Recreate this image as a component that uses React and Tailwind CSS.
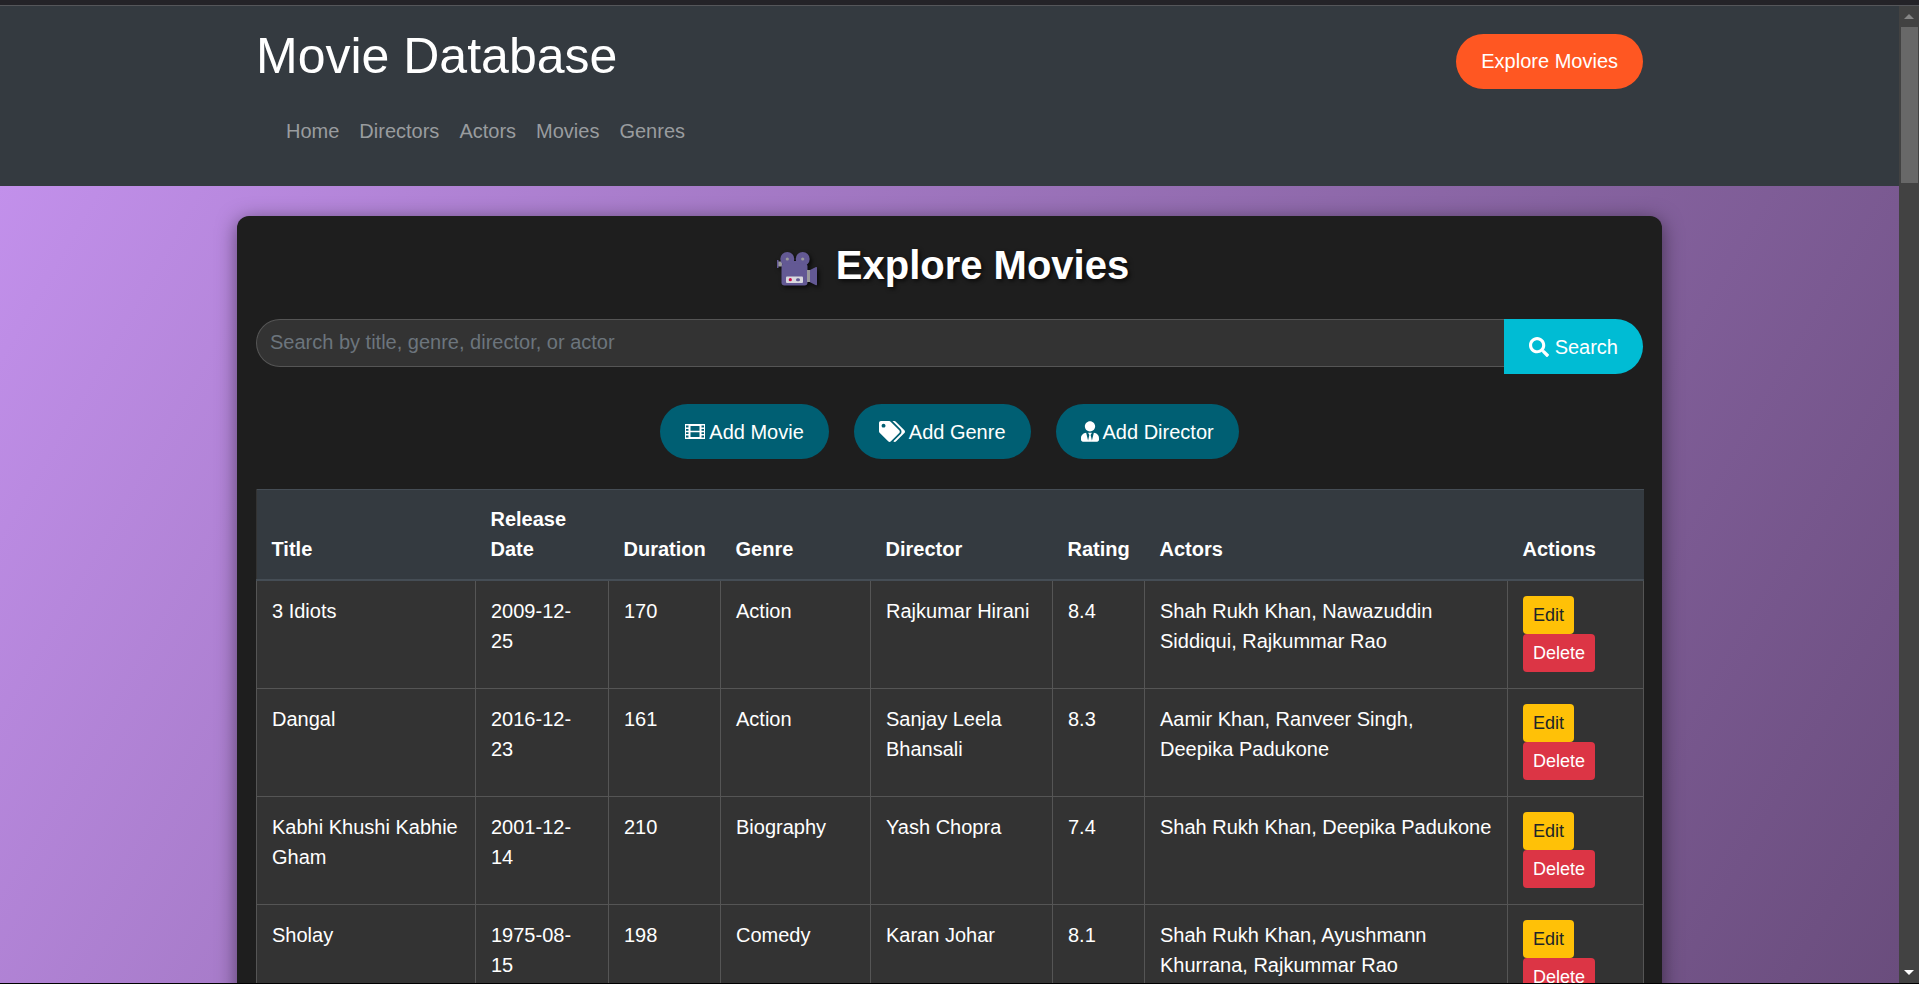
import { FaSearch, FaTags, FaUserTie } from "react-icons/fa";

const navItems = ["Home", "Directors", "Actors", "Movies", "Genres"];

const columns = [
  { label: "Title", width: "w-[219px]" },
  { label: "Release Date", width: "w-[133px]" },
  { label: "Duration", width: "w-[112px]" },
  { label: "Genre", width: "w-[150px]" },
  { label: "Director", width: "w-[182px]" },
  { label: "Rating", width: "w-[92px]" },
  { label: "Actors", width: "w-[363px]" },
  { label: "Actions", width: "w-[136px]" },
];

const movies = [
  ["3 Idiots", "2009-12-25", "170", "Action", "Rajkumar Hirani", "8.4", "Shah Rukh Khan, Nawazuddin Siddiqui, Rajkummar Rao"],
  ["Dangal", "2016-12-23", "161", "Action", "Sanjay Leela Bhansali", "8.3", "Aamir Khan, Ranveer Singh, Deepika Padukone"],
  ["Kabhi Khushi Kabhie Gham", "2001-12-14", "210", "Biography", "Yash Chopra", "7.4", "Shah Rukh Khan, Deepika Padukone"],
  ["Sholay", "1975-08-15", "198", "Comedy", "Karan Johar", "8.1", "Shah Rukh Khan, Ayushmann Khurrana, Rajkummar Rao"],
];

function FilmIcon() {
  return (
    <svg viewBox="0 0 20 15" className="h-[15px] w-5" fill="none" stroke="currentColor" aria-hidden="true">
      <path d="M0.5 0v15M19.500 0v15" strokeWidth="1" />
      <path d="M4.500 0v15M15.500 0v15" strokeWidth="2" />
      <path d="M4 1h12M4 14h12" strokeWidth="2" />
      <path d="M4 7.500h12" strokeWidth="1.500" />
      <path d="M0 .8h4M0 4.200h4M0 7.500h4M0 10.800h4M0 14.200h4M16 .8h4M16 4.200h4M16 7.500h4M16 10.800h4M16 14.200h4" strokeWidth="1.500" />
    </svg>
  );
}

function CameraIcon() {
  return (
    <svg viewBox="0 0 55 48" className="h-12 w-[55px] drop-shadow-[2px_2px_2px_rgba(0,0,0,0.7)]" aria-hidden="true">
      <path d="M8 20.500h4v5H8z" fill="#9b9b9b" />
      <path d="M7 19h1.500v8H7z" fill="#635994" />
      <circle cx="17.300" cy="18" r="7" fill="#635994" />
      <circle cx="32.700" cy="18" r="7" fill="#635994" />
      <circle cx="17.300" cy="18" r="1.600" fill="#9b9b9b" />
      <circle cx="32.700" cy="18" r="1.600" fill="#9b9b9b" />
      <path d="M20 20h10v6H20z" fill="#635994" />
      <rect x="11.500" y="22.500" width="26" height="22" rx="3" fill="#635994" />
      <rect x="37" y="29" width="3" height="12" fill="#9b9b9b" />
      <path d="M40 29l6-3q1-.4 1 .6v17q0 1-1 .6l-6-3z" fill="#635994" />
      <rect x="16" y="35.500" width="17" height="6.500" rx="1" fill="#d9d9de" />
      <circle cx="20.300" cy="38.700" r="1.600" fill="#ca0b4a" />
      <rect x="26" y="37.200" width="4" height="3" rx="1.500" fill="#635994" />
    </svg>
  );
}

function ActionButton({ icon, children }) {
  return (
    <button type="button" className="flex h-[55px] items-center gap-1 rounded-full bg-[#005f73] px-[25px] text-white">
      {icon}
      {children}
    </button>
  );
}

function Scrollbar() {
  return (
    <div className="flex w-5 shrink-0 flex-col items-center bg-[#424242]" aria-hidden="true">
      <div className="flex h-[21px] items-center justify-center">
        <svg viewBox="0 0 10 5" className="h-[5px] w-[10px]"><path d="M0 5L5 0l5 5z" fill="#868686" /></svg>
      </div>
      <div className="h-[156px] w-[17px] bg-[#686868]" />
      <div className="mt-auto flex h-[21px] items-center justify-center">
        <svg viewBox="0 0 10 5" className="h-[5px] w-[10px]"><path d="M0 0L5 5l5-5z" fill="#ffffff" /></svg>
      </div>
    </div>
  );
}

export default function App() {
  return (
    <div className="flex h-screen flex-col overflow-hidden border-b border-black font-['Liberation_Sans',Arial,sans-serif] text-[20px] leading-[30px] text-white">
      <div className="h-[6px] shrink-0 border-b border-[#55565a] bg-[#242328]" />
      <div className="flex min-h-0 flex-1">
        <div className="min-w-0 flex-1 overflow-hidden bg-linear-120 from-[#c693f0] to-[#6a4d7d]">
          <header className="bg-[#343a40] py-5">
            <div className="mx-auto max-w-[1425px] px-[19px]">
              <div className="flex items-center justify-between">
                <h1 className="mb-[10px] text-[50px] leading-[60px]">Movie Database</h1>
                <button type="button" className="h-[55px] rounded-full bg-[#ff5722] px-[25px]">Explore Movies</button>
              </div>
              <nav className="px-5 py-[10px]">
                <ul className="flex">
                  {navItems.map((item) => (
                    <li key={item}>
                      <a href="#" className="block p-[10px] text-[#999c9f]">{item}</a>
                    </li>
                  ))}
                </ul>
              </nav>
            </div>
          </header>

          <main className="mx-auto mt-[30px] max-w-[1425px] rounded-[12px] bg-[#1e1e1e] px-[19px] py-[25px] shadow-[0_4px_20px_rgba(0,0,0,0.5)]">
            <h2 className="mb-[30px] flex items-center justify-center gap-[11px] text-[40px] leading-[48px] font-bold [text-shadow:2px_2px_4px_rgba(0,0,0,0.7)]">
              <CameraIcon />
              Explore Movies
            </h2>

            <form className="mb-[30px] flex items-start">
              <input
                type="text"
                aria-label="Search movies"
                placeholder="Search by title, genre, director, or actor"
                className="h-12 min-w-0 flex-1 rounded-l-full border border-r-0 border-[#555555] bg-[#333333] px-[13px] pb-[2px] text-white placeholder:text-[#6c757d]"
              />
              <button type="button" className="flex h-[55px] items-center gap-[6px] rounded-r-full bg-[#00bcd4] px-[25px]">
                <FaSearch className="size-5" />
                Search
              </button>
            </form>

            <div className="mb-[30px] flex justify-center gap-[25px]">
              <ActionButton icon={<FilmIcon />}>Add Movie</ActionButton>
              <ActionButton icon={<FaTags className="h-[21px] w-[26px]" />}>Add Genre</ActionButton>
              <ActionButton icon={<FaUserTie className="h-[21px] w-[18px]" />}>Add Director</ActionButton>
            </div>

            <table className="w-full table-fixed border-collapse bg-[#333333]">
              <thead className="bg-[#343a40]">
                <tr className="border-t border-b-2 border-t-[#454d55] border-b-[#454d55]">
                  {columns.map((column) => (
                    <th key={column.label} scope="col" className={`${column.width} px-[15px] pt-[14px] pb-[15px] text-left align-bottom font-bold`}>
                      {column.label}
                    </th>
                  ))}
                </tr>
              </thead>
              <tbody>
                {movies.map((movie) => (
                  <tr key={movie[0]} className="h-[108px]">
                    {movie.map((value, index) => (
                      <td key={index} className="border border-[#555555] px-[15px] py-[15px] align-top">{value}</td>
                    ))}
                    <td className="border border-[#555555] px-[15px] py-[15px] align-top">
                      <div className="flex flex-col items-start text-[18px] leading-[38px]">
                        <button type="button" className="h-[38px] rounded-[4px] bg-[#ffc107] px-[10px] text-[#212529]">Edit</button>
                        <button type="button" className="h-[38px] rounded-[4px] bg-[#dc3545] px-[10px]">Delete</button>
                      </div>
                    </td>
                  </tr>
                ))}
              </tbody>
            </table>
          </main>
        </div>
        <Scrollbar />
      </div>
    </div>
  );
}
